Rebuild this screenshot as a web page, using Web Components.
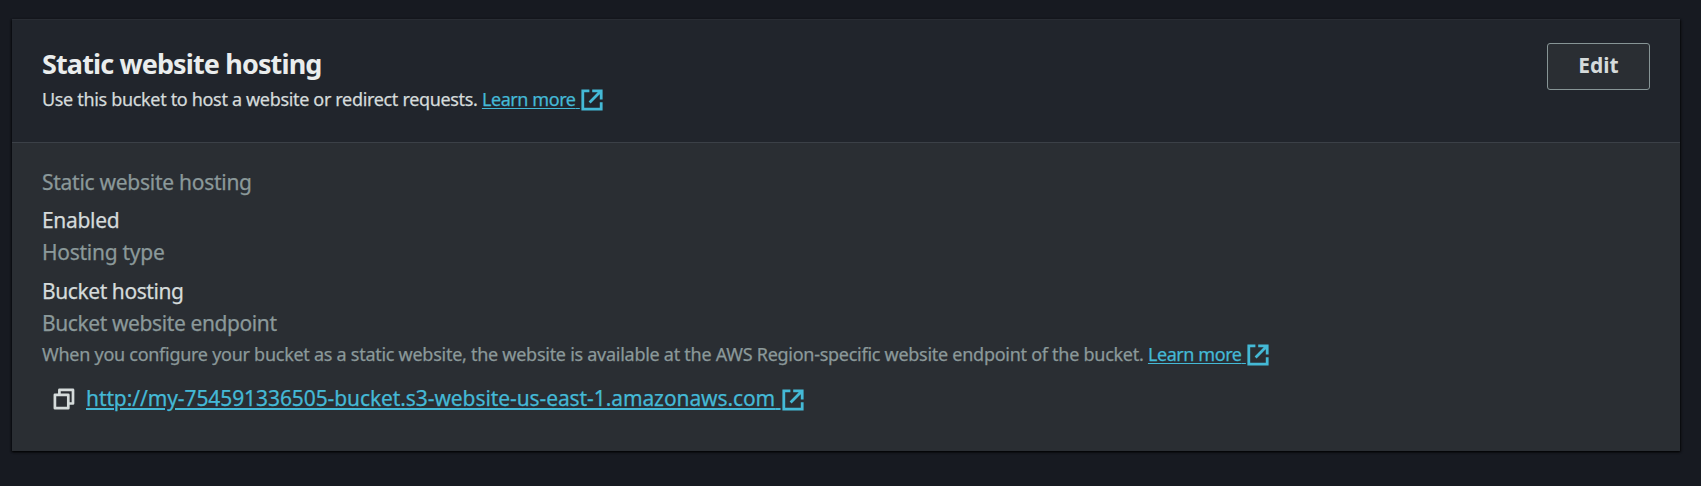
<!DOCTYPE html>
<html lang="en">
<head>
<meta charset="utf-8">
<title>Static website hosting</title>
<style>
html,body{margin:0;height:100%;background:#171a21}
body{font-family:"Noto Sans","Open Sans",sans-serif;color:#d5dbdb;overflow:hidden}
</style>
</head>
<body>
<hosting-page></hosting-page>
<script>
const define = (name, html) => {
  const t = document.createElement('template');
  t.innerHTML = html;
  customElements.define(name, class extends HTMLElement {
    constructor() {
      super();
      this.attachShadow({mode: 'open'}).append(t.content.cloneNode(true));
    }
  });
};

define('icon-external', `<style>:host{display:block;width:22px;height:22px;flex:none;white-space:normal}svg{display:block}</style>
<svg width="22" height="22" viewBox="0 0 22 22" fill="none" stroke="#44b9d6" stroke-width="2.8"><path d="M8.4 1.8H1.8V20.2H20.2V13.2M11.2 1.8H20.2V10.4M20.2 1.8L8.6 13.4"/></svg>`);

define('icon-copy', `<style>:host{display:block;width:22px;height:22px;flex:none;white-space:normal}svg{display:block}</style>
<svg width="22" height="22" viewBox="0 0 22 22" fill="none" stroke="#d5dbdb" stroke-width="2.7"><path d="M1.9 6.8H15.3V20.2H1.9ZM6.4 6.8V1.9H20V15.5H15.3" stroke-linejoin="round"/></svg>`);

define('external-link', `<style>
:host{display:flex;white-space:pre;color:#44b9d6;line-height:30px}
a{color:inherit;text-decoration:underline;text-decoration-thickness:var(--line,1px);text-underline-offset:var(--offset,1.5px)}
icon-external{margin:var(--icon-top,5px) 0 0 1px}
</style><a><slot></slot> </a><icon-external></icon-external>`);

define('plain-button', `<style>
:host{display:block;flex:none}
button{display:block;box-sizing:border-box;width:103px;height:47px;padding:0 0 2px;border:1px solid #879596;border-radius:3px;background:#2a2e33;color:#d5dbdb;font:700 21px/43px "Noto Sans","Open Sans",sans-serif}
</style><button><slot></slot></button>`);

define('panel-card', `<style>
:host{display:block;box-sizing:border-box;width:1668px;height:432px;background:#2a2e33;box-shadow:0 1px 2px #000a,1px 1px 2px #0008,-1px 1px 2px #0006}
header{box-sizing:border-box;display:flex;justify-content:space-between;align-items:flex-start;height:124px;padding:23px 30px 0;background:#21252c;border-top:1px solid #292d34;border-bottom:1px solid #3b4047}
.heading{padding-top:3px}
section{padding:24px 30px 0}
</style><header><div class="heading"><slot name="heading"></slot></div><slot name="actions"></slot></header><section><slot></slot></section>`);

define('key-value', `<style>
:host{display:block;line-height:30px;font-size:21px;white-space:pre;-webkit-text-stroke:.25px}
.label{color:#8b999a;letter-spacing:var(--ls-label,-.27px)}
.value{margin-top:var(--gap,8px);letter-spacing:var(--ls-value,-.32px)}
</style><div class="label"><slot name="label"></slot></div><div class="value"><slot></slot></div>`);

define('hosting-page', `<style>
:host{display:block;padding:19px 0 0 12px}
h2{margin:0;font-size:27px;line-height:36px;letter-spacing:-.87px;color:#eaeded}
.text{display:flex;font-size:18px;line-height:30px;white-space:pre;-webkit-text-stroke:.25px}
.desc{margin-top:2px;letter-spacing:-.33px}
.text external-link{letter-spacing:-.42px}
.hint{color:#8b999a;letter-spacing:-.27px;margin-top:1px}
.endpoint{color:#8b999a;font-size:21px;line-height:30px;letter-spacing:-.4px;margin-top:2px;-webkit-text-stroke:.25px}
.url{display:flex;font-size:21px;margin-top:14px;padding-left:11px;-webkit-text-stroke:.25px}
.url icon-copy{margin:5px 11px 0 0}
.url external-link{letter-spacing:-.09px;--line:2px;--offset:2px;--icon-top:6px}
.type{margin-top:2px;--gap:9px;--ls-value:-.42px}
</style>
<panel-card>
<div slot="heading"><h2>Static website hosting</h2><div class="text desc"><span>Use this bucket to host a website or redirect requests. </span><external-link>Learn more</external-link></div></div>
<plain-button slot="actions">Edit</plain-button>
<key-value><span slot="label">Static website hosting</span>Enabled</key-value>
<key-value class="type"><span slot="label">Hosting type</span>Bucket hosting</key-value>
<div class="endpoint">Bucket website endpoint</div>
<div class="text hint"><span>When you configure your bucket as a static website, the website is available at the AWS Region-specific website endpoint of the bucket. </span><external-link>Learn more</external-link></div>
<div class="url"><icon-copy></icon-copy><external-link>http://my-754591336505-bucket.s3-website-us-east-1.amazonaws.com</external-link></div>
</panel-card>`);
</script>
</body>
</html>
